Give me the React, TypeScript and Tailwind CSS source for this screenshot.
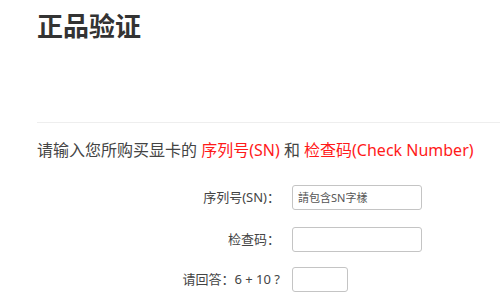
import React from 'react';

export default function App() {
  return (
    <div className="w-[500px] h-[300px] overflow-hidden bg-white pl-[37px] font-['Noto_Sans','Noto_Sans_CJK_SC',sans-serif] text-[#333]">
      {/* Title */}
      <div className="h-[123px] border-b border-[#eeeeee] pt-[8px]">
        <h1 className="text-[26px] font-bold leading-[36px] text-[#333]">正品验证</h1>
      </div>

      {/* Intro */}
      <p className="mt-[16px] text-[16px] leading-[22px] text-[#444] whitespace-nowrap">
        请输入您所购买显卡的 <span className="text-[#ff1a1a]">序列号(SN)</span> 和{' '}
        <span className="text-[#ff1a1a]">检查码(Check Number)</span>
      </p>

      {/* Form */}
      <div className="mt-[24px] flex flex-col gap-[17px] text-[13px] text-[#444]">
        <div className="flex items-center">
          <label className="w-[243px] text-right">序列号(SN)：</label>
          <input
            placeholder="請包含SN字樣"
            className="ml-[12px] h-[25px] w-[130px] rounded-[3px] border border-[#c4c4c4] px-[5px] text-[11px] placeholder:text-[#555] outline-none"
          />
        </div>
        <div className="flex items-center">
          <label className="w-[243px] text-right">检查码：</label>
          <input className="ml-[12px] h-[25px] w-[130px] rounded-[3px] border border-[#c4c4c4] px-[5px] outline-none" />
        </div>
        <div className="-mt-[2px] flex items-center">
          <label className="w-[243px] text-right">请回答：6 + 10 ?</label>
          <input className="ml-[12px] h-[25px] w-[56px] rounded-[3px] border border-[#c4c4c4] px-[5px] outline-none" />
        </div>
      </div>
    </div>
  );
}
